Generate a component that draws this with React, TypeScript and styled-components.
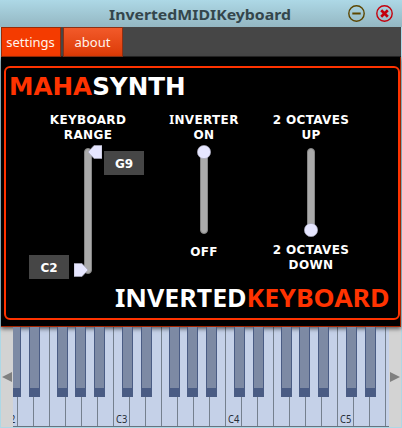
import React from 'react';
import styled, { createGlobalStyle } from 'styled-components';

const GlobalStyle = createGlobalStyle`
  * { box-sizing: border-box; }
  body { margin: 0; background: #add8e6; overflow: hidden; }
`;

const Window = styled.main`
  width: 402px;
  height: 428px;
  padding: 0 1px 1px;
  display: flex;
  flex-direction: column;
  background: #add8e6;
  font-family: 'Noto Sans', sans-serif;
  overflow: hidden;
`;

const TitleBar = styled.header`
  height: 27px;
  flex: none;
  margin: 0 -1px;
  padding: 0 9px 0 109px;
  display: flex;
  align-items: center;
  background: linear-gradient(#add8e6, #94b7c2);
  color: #34464c;
`;

const Text = styled.span<{ $size: number; $stretch?: number; $weight?: number; $width?: number; $font?: string }>`
  display: block;
  width: ${p => (p.$width ? `${p.$width}px` : 'auto')};
  font-family: ${p => p.$font ?? "'Noto Sans', sans-serif"};
  font-size: ${p => p.$size}px;
  font-weight: ${p => p.$weight ?? 700};
  white-space: nowrap;
  transform: scaleX(${p => p.$stretch ?? 1});
  transform-origin: left center;
`;

const WindowActions = styled.div`
  margin-left: auto;
  display: flex;
  gap: 11px;
  svg { display: block; }
`;

const TabBar = styled.nav`
  height: 30px;
  flex: none;
  display: flex;
  gap: 2px;
  background: #464646;
  border-bottom: 1px solid #252525;
`;

const Tab = styled.button<{ $active?: boolean }>`
  width: 60px;
  height: 30px;
  padding: 0 1px 0 0;
  display: flex;
  align-items: center;
  justify-content: center;
  border: 1px solid ${p => (p.$active ? '#9b2a05' : '#8c3014')};
  background: ${p => (p.$active ? '#f43b00' : 'linear-gradient(#f25a2a, #dc3a06)')};
  color: #fff4ec;
`;

const Panel = styled.section`
  height: 270px;
  flex: none;
  padding: 9px 0 6px 3px;
  background: #000;
  border: solid #a42400;
  border-width: 0 1px 1px 0;
  box-shadow: 0 2px 4px rgba(0, 0, 0, 0.55);
  z-index: 1;
`;

const Frame = styled.div`
  width: 396px;
  height: 254px;
  border: 2px solid #ff3300;
  border-radius: 6px;
  display: flex;
  flex-direction: column;
  color: #fff;
`;

const Brand = styled.h1<{ $bottom?: boolean }>`
  margin: 0;
  height: ${p => (p.$bottom ? 41 : 37)}px;
  flex: none;
  padding: ${p => (p.$bottom ? '0 0 0 109px' : '2px 0 0 3px')};
  display: flex;
  align-items: center;
  line-height: 1;
  em { font-style: normal; color: #ff3300; }
`;

const Controls = styled.div`
  height: 172px;
  padding-top: 8px;
  display: grid;
  grid-template-columns: 148px 107px 130px;
`;

const Column = styled.div`
  display: flex;
  flex-direction: column;
`;

const Label = styled.div<{ $indent?: number; $gap?: number }>`
  display: flex;
  flex-direction: column;
  align-items: center;
  width: 100px;
  margin: ${p => p.$gap ?? 0}px 0 0 ${p => p.$indent ?? 0}px;
  font: 700 12px/15px 'DejaVu Sans', sans-serif;
  letter-spacing: 0.35px;
  white-space: nowrap;
`;

const SerifI = styled.span`
  font-family: 'Noto Sans', sans-serif;
  font-size: 12.5px;
  line-height: 1;
`;

const RangeRow = styled.div`
  display: grid;
  grid-template-columns: 40px 5px 28px 2px 40px;
  height: 134px;
  margin-left: 23px;
  margin-top: 2px;
`;

const Note = styled.div<{ $col: number; $top: number }>`
  grid-column: ${p => p.$col};
  grid-row: 1;
  height: 24px;
  margin-top: ${p => p.$top}px;
  padding-top: 1px;
  background: #464646;
  display: flex;
  justify-content: center;
  align-items: center;
  font: 700 12px 'DejaVu Sans', sans-serif;
`;

const RangeArt = styled.svg`
  grid-column: 3;
  grid-row: 1;
`;

const SliderArt = styled.svg`
  display: block;
  margin: 2px 43px 0;
`;

const Keyboard = styled.section`
  height: 100px;
  display: flex;
  flex: none;
`;

const Scroll = styled.button`
  width: 12px;
  height: 100px;
  padding: 0;
  flex: none;
  border: 0;
  background: #d3d3d3;
  svg { display: block; }
`;

const Keys = styled.div`
  width: 376px;
  flex: none;
  height: 100px;
  overflow: hidden;
  display: flex;
  border-bottom: 1px solid #66747f;
  background: #c5d1e8;
`;

const WhiteKey = styled.div<{ $first?: boolean }>`
  position: relative;
  width: 16px;
  height: 99px;
  flex: none;
  margin-left: ${p => (p.$first ? -12 : 0)}px;
  border-left: 1px solid #75808e;
  display: flex;
  align-items: flex-end;
  padding: 0 0 1px 2px;
  color: #272d36;
  line-height: 13px;
`;

const BlackKey = styled.i<{ $left: number }>`
  position: absolute;
  z-index: 1;
  top: 0;
  left: ${p => p.$left}px;
  width: 11px;
  height: 70px;
  background: #7d8aa4;
  border: solid #4a5c84;
  border-width: 0 1px 9px;
`;

// Horizontal start of each sharp, measured from its natural key.
const sharps = [8, 11, null, 7, 9, 12, null];

function Slider({ down = false }: { down?: boolean }) {
  return (
    <SliderArt width="14" height="93" viewBox="0 0 14 93">
      <rect x="3.5" y="3.5" width="7" height="85" rx="3.5" fill="#aaa" stroke="#858585" />
      <circle cx="7" cy={down ? 85 : 7} r="6.6" fill="#e6e6ff" stroke="#a6a6b7" strokeWidth=".7" />
    </SliderArt>
  );
}

export default function App() {
  return (
    <>
      <GlobalStyle />
      <Window>
        <TitleBar>
          <Text $size={15} $width={182} $stretch={1.055}>InvertedMIDIKeyboard</Text>
          <WindowActions>
            <svg width="17" height="17" viewBox="0 0 17 17" fill="none" stroke="#5c4600">
              <circle cx="8.5" cy="8.5" r="7.7" strokeWidth="1.4" />
              <path d="M4.3 8.5h8.4" strokeWidth="2" />
            </svg>
            <svg width="17" height="17" viewBox="0 0 17 17" fill="none" stroke="#c4000c">
              <circle cx="8.5" cy="8.5" r="7.7" strokeWidth="1.4" />
              <path d="m5.2 5.2 6.6 6.6m0-6.6-6.6 6.6" strokeWidth="2.7" />
            </svg>
          </WindowActions>
        </TitleBar>
        <TabBar>
          <Tab $active><Text $size={13} $weight={400}>settings</Text></Tab>
          <Tab><Text $size={13} $weight={400}>about</Text></Tab>
        </TabBar>
        <Panel>
          <Frame>
            <Brand><Text $size={24.6} $font="'DejaVu Sans', sans-serif"><em>MAHA</em>SYNTH</Text></Brand>
            <Controls>
              <Column>
                <Label $indent={32}><span>KEYBOARD</span><span>RANGE</span></Label>
                <RangeRow>
                  <Note $col={1} $top={110}>C2</Note>
                  <RangeArt width="28" height="134" viewBox="0 0 28 134">
                    <rect x="10.5" y="3.5" width="7" height="125" rx="3.5" fill="#aaa" stroke="#858585" />
                    <path d="m14 7 6-6.5h8v13h-8z" fill="#e6e6ff" stroke="#a6a6b7" strokeWidth=".7" />
                    <path d="m14 125-6-6.5H0v13h8z" fill="#e6e6ff" stroke="#a6a6b7" strokeWidth=".7" />
                  </RangeArt>
                  <Note $col={5} $top={6}>G9</Note>
                </RangeRow>
              </Column>
              <Column>
                <Label><span><SerifI>I</SerifI>NVERTER</span><span>ON</span></Label>
                <Slider />
                <Label $gap={7}>OFF</Label>
              </Column>
              <Column>
                <Label><span>2 OCTAVES</span><span>UP</span></Label>
                <Slider down />
                <Label $gap={5}><span>2 OCTAVES</span><span>DOWN</span></Label>
              </Column>
            </Controls>
            <Brand $bottom><Text $size={25} $stretch={1.066}>INVERTED<em>KEYBOARD</em></Text></Brand>
          </Frame>
        </Panel>
        <Keyboard>
          <Scroll aria-label="Lower notes">
            <svg width="12" height="100"><path d="M1 50 11 45v10z" fill="#808080" /></svg>
          </Scroll>
          <Keys>
            {Array.from({ length: 25 }, (_, i) => {
              const sharp = sharps[i % 7];
              return (
                <WhiteKey key={i} $first={i === 0}>
                  {i % 7 === 0 && <Text $size={11} $weight={400} $stretch={0.85}>{`C${2 + i / 7}`}</Text>}
                  {sharp !== null && <BlackKey $left={sharp} />}
                </WhiteKey>
              );
            })}
          </Keys>
          <Scroll aria-label="Higher notes">
            <svg width="12" height="100"><path d="M11 50 1 45v10z" fill="#808080" /></svg>
          </Scroll>
        </Keyboard>
      </Window>
    </>
  );
}
